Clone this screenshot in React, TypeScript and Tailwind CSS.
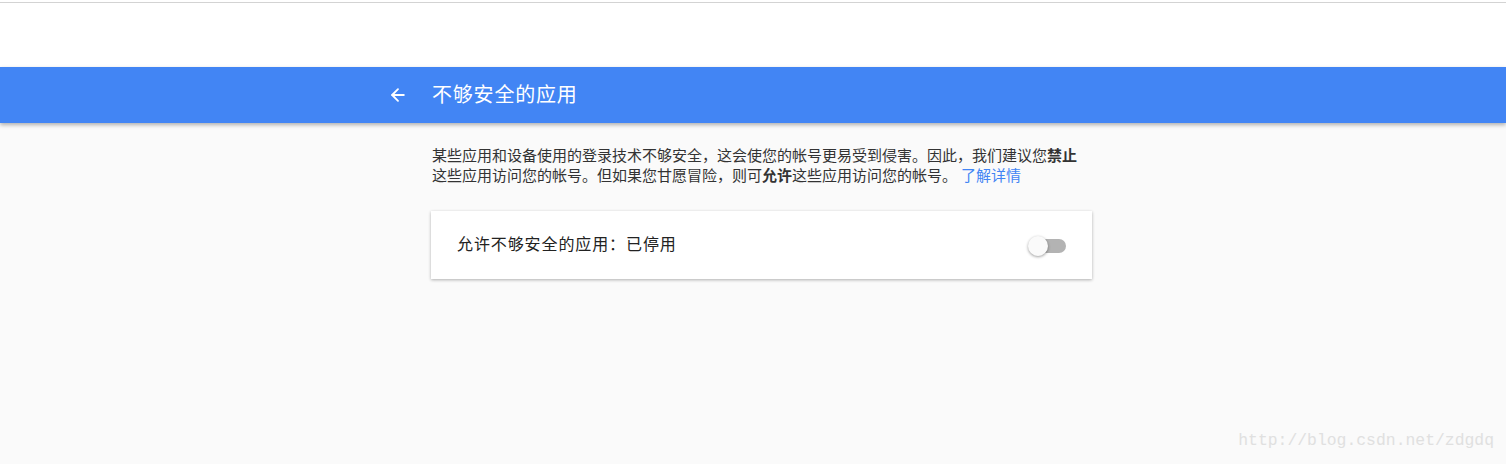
import { ArrowLeft } from "lucide-react";

const font = { fontFamily: '"Liberation Sans", "Noto Sans CJK SC", sans-serif' };

function Toggle() {
  return (
    <div className="relative h-5 w-10">
      <div className="absolute left-[6px] top-[4px] h-[14px] w-[32px] rounded-full bg-[#b3b3b3]" />
      <div className="absolute left-0 top-[1px] h-5 w-5 rounded-full bg-[#fafafa] shadow-[0_1px_3px_rgba(0,0,0,0.4)]" />
    </div>
  );
}

export default function App() {
  return (
    <div className="flex h-[464px] w-full flex-col bg-[#fafafa] text-[#333]" style={font}>
      <div className="h-[67px] bg-white pt-[2px]">
        <div className="h-px bg-[#d3d3d3]" />
      </div>
      <header className="relative z-10 h-[56px] bg-[#4285f4] shadow-[0_2px_4px_rgba(0,0,0,0.3)]">
        <div className="ml-[432px] flex h-full w-[660px] items-center">
          <ArrowLeft size={20} strokeWidth={2.2} className="-ml-[44px] text-white" />
          <h1 className="ml-[24px] text-[20px] font-normal tracking-[0.8px] text-white">不够安全的应用</h1>
        </div>
      </header>
      <main className="ml-[431px] w-[661px] pt-[23px]">
        <p className="whitespace-nowrap pl-px text-[15px] leading-[20px] text-[#333]">
          某些应用和设备使用的登录技术不够安全，这会使您的帐号更易受到侵害。因此，我们建议您
          <b className="font-bold">禁止</b>
          <br />
          这些应用访问您的帐号。但如果您甘愿冒险，则可<b className="font-bold">允许</b>
          这些应用访问您的帐号。
          <a className="ml-1 text-[#4285f4]" href="#">
            了解详情
          </a>
        </p>
        <section className="mt-[25px] flex h-[68px] items-center justify-between bg-white pl-[26px] pr-[24px] shadow-[0_1px_3px_rgba(0,0,0,0.3)]">
          <span className="text-[16px] tracking-[0.9px] text-[#222]">允许不够安全的应用：已停用</span>
          <Toggle />
        </section>
      </main>
      <div
        className="mt-auto mb-[10px] mr-[12px] self-end text-[16.4px] text-[#e0e0e0]"
        style={{ fontFamily: '"Liberation Mono", monospace' }}
      >
        http://blog.csdn.net/zdgdq
      </div>
    </div>
  );
}
